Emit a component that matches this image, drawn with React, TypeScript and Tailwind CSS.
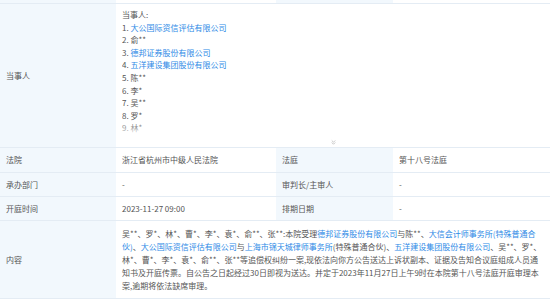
import { ChevronsDown } from 'lucide-react';

const PARTIES: { name: string; link?: boolean }[] = [
  { name: '大公国际资信评估有限公司', link: true },
  { name: '俞**' },
  { name: '德邦证券股份有限公司', link: true },
  { name: '五洋建设集团股份有限公司', link: true },
  { name: '陈**' },
  { name: '李*' },
  { name: '吴**' },
  { name: '罗*' },
  { name: '林*' },
];

const label = 'bg-[#f2f8fd] px-[6px] flex items-center border-b border-[#e4ecf4]';
const value = 'bg-white px-[6px] flex items-center border-b border-[#e4ecf4]';

function Link({ children }: { children: React.ReactNode }) {
  return <span className="text-[#2e8ae6]">{children}</span>;
}

export default function App() {
  return (
    <div
      className="w-[550px] h-[303px] overflow-hidden bg-white text-[#555] text-[8px]"
      style={{ fontFamily: '"Noto Sans CJK SC", "Noto Sans", sans-serif' }}
    >
      <div className="grid grid-cols-[116px_160px_117px_1fr]">
        {/* tail of the previous row */}
        <div className={`${label} h-[4px]`} />
        <div className={`${value} h-[4px]`} />
        <div className={`${label} h-[4px]`} />
        <div className={`${value} h-[4px]`} />

        {/* 当事人 */}
        <div className={`${label} h-[144px]`}>当事人</div>
        <div className="col-span-3 bg-white border-b border-[#e4ecf4] px-[6px] pt-[5px] flex flex-col">
          <div className="relative h-[130px] overflow-hidden leading-[12.6px]">
            <div>当事人:</div>
            {PARTIES.map((p, i) => (
              <div key={i}>
                {i + 1}. {p.link ? <Link>{p.name}</Link> : p.name}
              </div>
            ))}
            <div className="absolute left-0 right-0 bottom-0 h-[16px] bg-gradient-to-b from-white/20 to-white" />
          </div>
          <div className="flex justify-center">
            <ChevronsDown className="w-[7px] h-[7px] text-[#a0a0a0]" strokeWidth={2} />
          </div>
        </div>

        {/* 法院 / 法庭 */}
        <div className={`${label} h-[25px]`}>法院</div>
        <div className={value}>浙江省杭州市中级人民法院</div>
        <div className={label}>法庭</div>
        <div className={value}>第十八号法庭</div>

        <div className={`${label} h-[24px]`}>承办部门</div>
        <div className={value}>-</div>
        <div className={label}>审判长/主审人</div>
        <div className={value}>-</div>

        <div className={`${label} h-[24px]`}>开庭时间</div>
        <div className={value}>2023-11-27 09:00</div>
        <div className={label}>排期日期</div>
        <div className={value}>-</div>

        {/* 内容 */}
        <div className={`${label} h-[78px]`}>内容</div>
        <div className="col-span-3 bg-white border-b border-[#e4ecf4] px-[6px] py-[6px] leading-[13px] whitespace-nowrap">
          <div>
            吴**、罗*、林*、曹*、李*、袁*、俞**、张**:本院受理<Link>德邦证券股份有限公司</Link>与陈**、<Link>大信会计师事务所(特殊普通合</Link>
          </div>
          <div>
            <Link>伙)</Link>、<Link>大公国际资信评估有限公司</Link>与<Link>上海市锦天城律师事务所</Link>(特殊普通合伙)、<Link>五洋建设集团股份有限公司</Link>、吴**、罗*、
          </div>
          <div>林*、曹*、李*、袁*、俞**、张**等追偿权纠纷一案,现依法向你方公告送达上诉状副本、证据及告知合议庭组成人员通</div>
          <div>知书及开庭传票。自公告之日起经过30日即视为送达。并定于2023年11月27日上午9时在本院第十八号法庭开庭审理本</div>
          <div>案,逾期将依法缺席审理。</div>
        </div>
      </div>
    </div>
  );
}
